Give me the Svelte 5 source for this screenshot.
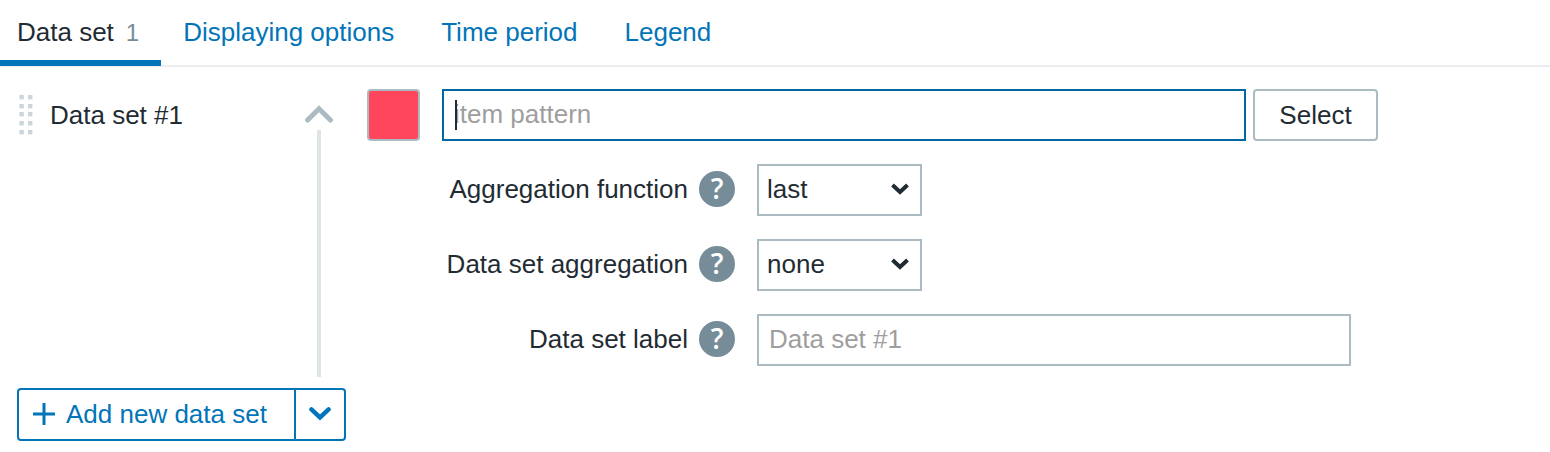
<script>
  const tabs = ["Data set", "Displaying options", "Time period", "Legend"];
  const dotRows = [0, 9, 17, 26, 35];

  let activeTab = $state(0);
  let open = $state(true);
  let pattern = $state("");
  let focused = $state(true);
  let label = $state("");

  let selects = $state([
    {
      id: "aggregate-function",
      name: "Aggregation function",
      value: "last",
      options: ["last", "first", "min", "max", "avg", "count", "sum"]
    },
    {
      id: "aggregate-grouping",
      name: "Data set aggregation",
      value: "none",
      options: ["none", "each item", "data set"]
    }
  ]);

  const selectTab = (e, i) => {
    e.preventDefault();
    activeTab = i;
  };
</script>

<nav class="tabs">
  {#each tabs as tab, i}
    <a href="#tab-{i}" class:active={activeTab === i} onclick={e => selectTab(e, i)}>
      {tab}{#if i === 0}<span class="count">1</span>{/if}
    </a>
  {/each}
</nav>

<main>
  <div class="data-set">
    <div class="head">
      <svg class="drag" width="14" height="40" viewBox="0 0 14 40" aria-hidden="true">
        {#each dotRows as y}
          <rect x="0.4" {y} width="4.4" height="4.4" />
          <rect x="9" {y} width="4.4" height="4.4" />
        {/each}
      </svg>
      <span class="name">Data set #1</span>
      <div class="collapse">
        <button aria-label="Collapse" aria-expanded={open} onclick={() => (open = !open)}>
          <svg width="28" height="18" viewBox="0 0 28 18">
            <path d="M2.6 15 14 3.8 25.4 15" />
          </svg>
        </button>
        <div class="line"></div>
      </div>
    </div>

    <form onsubmit={e => e.preventDefault()}>
      <div class="row">
        <button type="button" class="color" aria-label="Color"></button>
        <div class="pattern">
          <input
            type="text"
            aria-label="item pattern"
            placeholder="item pattern"
            bind:value={pattern}
            onblur={() => (focused = false)} />
          {#if focused && pattern === ""}
            <span class="caret"></span>
          {/if}
        </div>
        <button type="button" class="select-btn">Select</button>
      </div>

      {#if open}
        {#each selects as field}
          <div class="field">
            <div class="label">
              <label for={field.id}>{field.name}</label>
              <button type="button" class="help" aria-label="Help">?</button>
            </div>
            <div class="dropdown">
              <select id={field.id} bind:value={field.value}>
                {#each field.options as option}
                  <option>{option}</option>
                {/each}
              </select>
              <svg width="18" height="12" viewBox="0 0 18 12" aria-hidden="true">
                <path d="M1.5 2 9 9l7.5-7" />
              </svg>
            </div>
          </div>
        {/each}
        <div class="field">
          <div class="label">
            <label for="data-set-label">Data set label</label>
            <button type="button" class="help" aria-label="Help">?</button>
          </div>
          <input id="data-set-label" type="text" placeholder="Data set #1" bind:value={label} />
        </div>
      {/if}
    </form>
  </div>

  <div class="add">
    <button class="add-main">
      <svg width="22" height="22" viewBox="0 0 22 22" aria-hidden="true">
        <path d="M11 0v22M0 11h22" />
      </svg>
      Add new data set
    </button>
    <button class="add-menu" aria-label="More options">
      <svg width="22" height="14" viewBox="0 0 22 14">
        <path d="M2.4 2.4 11 10.4l8.6-8" />
      </svg>
    </button>
  </div>
</main>

<style>
  :global(body) {
    margin: 0;
    background: #fff;
    color: #1f2c33;
    font: 26px/30px "Liberation Sans", Arial, sans-serif;
  }

  button,
  input,
  select {
    box-sizing: border-box;
    margin: 0;
    padding: 0;
    background: #fff;
    color: inherit;
    font: inherit;
    border: 2px solid #acbbc2;
    border-radius: 0;
    outline: none;
  }

  button {
    cursor: pointer;
  }

  svg {
    display: block;
    fill: none;
    stroke: currentColor;
  }

  .tabs {
    display: flex;
    box-shadow: inset 0 -2px #ebeef0;
    height: 67px;
  }

  .tabs a {
    box-sizing: border-box;
    height: 66px;
    padding: 17px 25px 0 22px;
    color: #0275b8;
    text-decoration: none;
    white-space: nowrap;
    border-bottom: 6px solid transparent;
  }

  .tabs a:first-child {
    padding-left: 17px;
    padding-right: 22px;
  }

  .tabs a.active {
    color: #1f2c33;
    border-bottom-color: #0275b8;
  }

  .count {
    margin-left: 12px;
    color: #768d99;
    font-size: 24px;
  }

  main {
    padding: 22px 17px 11px;
  }

  .data-set {
    display: flex;
    gap: 34px;
  }

  .head {
    display: flex;
    align-items: flex-start;
    flex: none;
    width: 316px;
  }

  .drag {
    margin-top: 6px;
    padding: 0 2px;
    fill: #ccd5d9;
    stroke: none;
  }

  .name {
    flex: 1;
    margin-left: 15px;
    line-height: 52px;
  }

  .collapse {
    display: flex;
    flex-direction: column;
    align-items: center;
    align-self: stretch;
    width: 28px;
  }

  .collapse button {
    width: 28px;
    padding: 16px 0 7px;
    border: none;
    color: #acbbc2;
  }

  .collapse path {
    stroke-width: 5;
    stroke-linecap: round;
  }

  .line {
    flex: 1;
    width: 4px;
    background: #dfe4e7;
  }

  form {
    display: flex;
    flex-direction: column;
    gap: 23px;
    flex: 1;
    min-width: 0;
    max-width: 1011px;
    padding-bottom: 11px;
  }

  .row {
    display: flex;
  }

  .color {
    width: 53px;
    height: 52px;
    background: #ff465c;
    border-radius: 4px;
  }

  .pattern {
    position: relative;
    flex: 1;
    margin: 0 7px 0 22px;
  }

  input {
    width: 100%;
    height: 52px;
    padding: 0 10px 2px;
  }

  input::placeholder {
    color: #9e9e9e;
    opacity: 1;
  }

  .pattern input {
    border-color: #0266a0;
  }

  .caret {
    position: absolute;
    top: 11px;
    left: 13px;
    width: 2px;
    height: 30px;
    background: #1f2c33;
    pointer-events: none;
  }

  .select-btn {
    width: 125px;
    height: 52px;
    border-radius: 4px;
  }

  .field {
    display: grid;
    grid-template-columns: 368px minmax(0, 594px);
    gap: 22px;
  }

  .label {
    display: flex;
    align-items: center;
    justify-content: flex-end;
    gap: 11px;
    padding-bottom: 2px;
  }

  .help {
    width: 36px;
    height: 36px;
    padding-bottom: 2px;
    border: none;
    border-radius: 50%;
    background: #768d99;
    color: #fff;
    font: 600 28px/34px "Open Sans", sans-serif;
  }

  .dropdown {
    display: grid;
    align-items: center;
    width: 165px;
  }

  .dropdown select,
  .dropdown svg {
    grid-area: 1 / 1;
  }

  .dropdown select {
    appearance: none;
    width: 100%;
    height: 52px;
    padding: 0 36px 2px 8px;
  }

  .dropdown svg {
    justify-self: end;
    margin: 0 13px 2px 0;
    stroke-width: 4;
    pointer-events: none;
  }

  .add {
    display: flex;
    width: 329px;
    margin-top: 11px;
    color: #0275b8;
  }

  .add button {
    display: flex;
    align-items: center;
    height: 53px;
    padding-bottom: 2px;
    border-color: #0275b8;
  }

  .add-main {
    flex: 1;
    gap: 11px;
    padding-left: 14px;
    border-radius: 4px 0 0 4px;
    white-space: nowrap;
  }

  .add-main svg {
    stroke-width: 3;
  }

  .add .add-menu {
    justify-content: center;
    width: 50px;
    border-left: none;
    border-radius: 0 4px 4px 0;
  }

  .add-menu svg {
    stroke-width: 4.4;
    stroke-linecap: round;
  }
</style>
